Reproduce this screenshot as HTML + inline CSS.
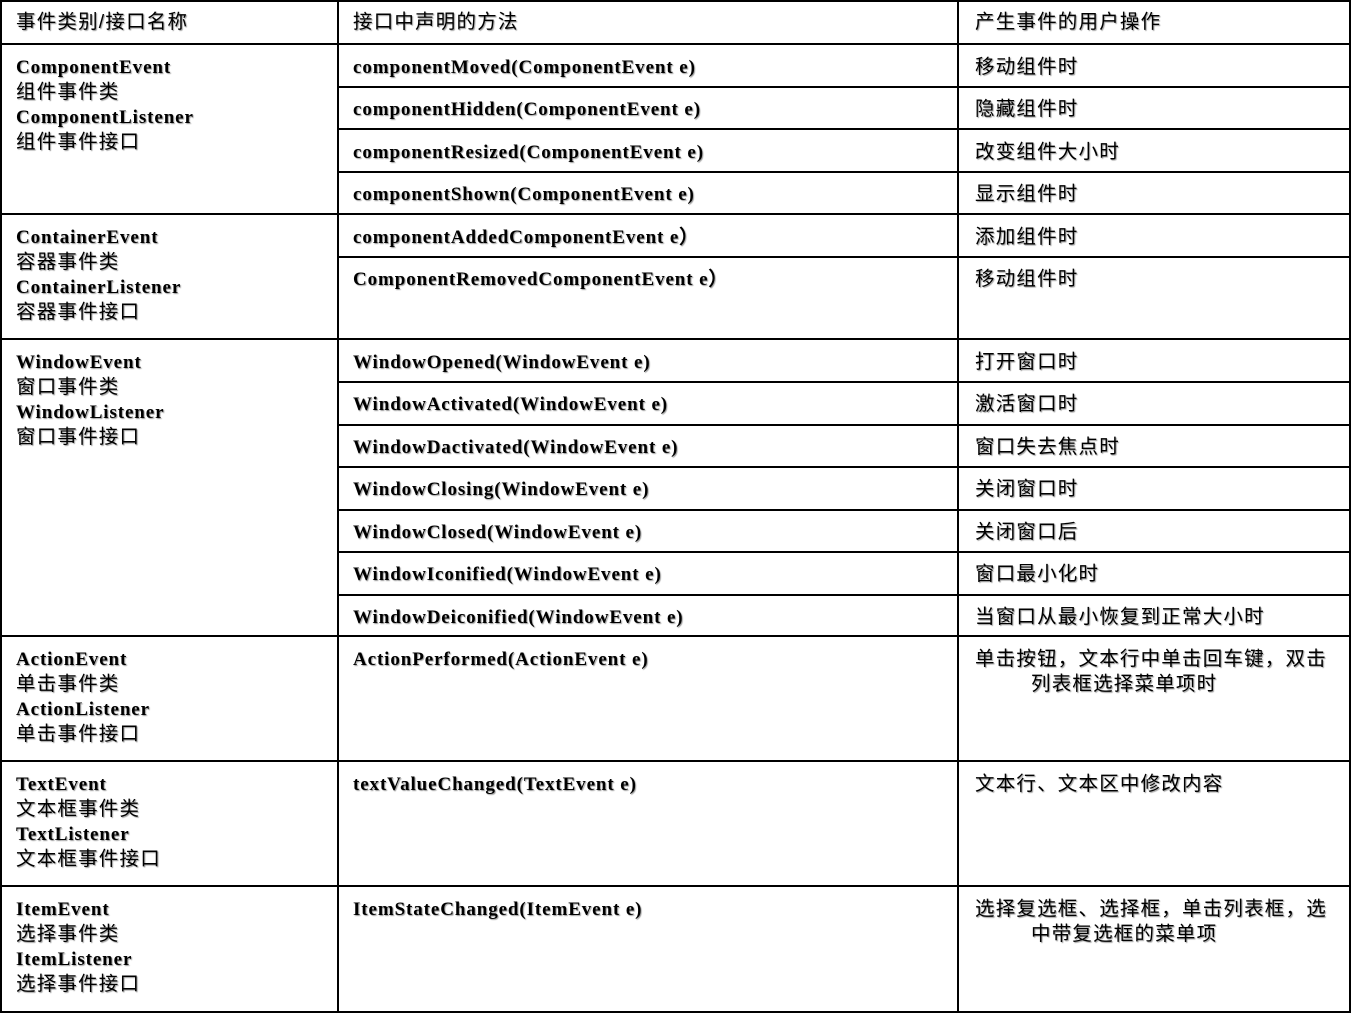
<!DOCTYPE html>
<html><head><meta charset="utf-8"><style>
html,body{margin:0;padding:0;background:#fff;width:1351px;height:1013px;overflow:hidden;position:relative}
.h{position:absolute;left:0;width:1351px;height:2px;background:#000}
.v{position:absolute;top:0;width:2px;background:#000}
.t{position:absolute;font-family:"Liberation Serif","WenQuanYi Zen Hei",serif;font-weight:bold;font-size:19px;letter-spacing:0.9px;line-height:25px;color:#000;text-shadow:1px 1px 1px #999;white-space:nowrap}
.c{font-family:"Liberation Sans","WenQuanYi Zen Hei",sans-serif;font-weight:normal;font-size:19.5px;letter-spacing:1.2px}
</style></head><body>
<div class="h" style="top:0"></div>
<div class="h" style="top:43px"></div>
<div class="h" style="top:86px;left:337px;width:1014px"></div>
<div class="h" style="top:128px;left:337px;width:1014px"></div>
<div class="h" style="top:171px;left:337px;width:1014px"></div>
<div class="h" style="top:213px"></div>
<div class="h" style="top:256px;left:337px;width:1014px"></div>
<div class="h" style="top:338px"></div>
<div class="h" style="top:381px;left:337px;width:1014px"></div>
<div class="h" style="top:424px;left:337px;width:1014px"></div>
<div class="h" style="top:466px;left:337px;width:1014px"></div>
<div class="h" style="top:509px;left:337px;width:1014px"></div>
<div class="h" style="top:551px;left:337px;width:1014px"></div>
<div class="h" style="top:594px;left:337px;width:1014px"></div>
<div class="h" style="top:635px"></div>
<div class="h" style="top:760px"></div>
<div class="h" style="top:885px"></div>
<div class="h" style="top:1011px"></div>
<div class="v" style="left:0;height:1013px"></div>
<div class="v" style="left:337px;height:1013px"></div>
<div class="v" style="left:957px;height:1013px"></div>
<div class="v" style="left:1349px;height:1013px"></div>

<div class="t c" style="left:16px;top:10px">事件类别/接口名称</div>
<div class="t c" style="left:353px;top:10px">接口中声明的方法</div>
<div class="t c" style="left:975px;top:10px">产生事件的用户操作</div>

<div class="t" style="left:16px;top:55px">ComponentEvent<br><span class="c">组件事件类</span><br>ComponentListener<br><span class="c">组件事件接口</span></div>
<div class="t" style="left:353px;top:55px">componentMoved(ComponentEvent e)</div>
<div class="t" style="left:353px;top:97px">componentHidden(ComponentEvent e)</div>
<div class="t" style="left:353px;top:140px">componentResized(ComponentEvent e)</div>
<div class="t" style="left:353px;top:182px">componentShown(ComponentEvent e)</div>
<div class="t c" style="left:975px;top:55px">移动组件时</div>
<div class="t c" style="left:975px;top:97px">隐藏组件时</div>
<div class="t c" style="left:975px;top:140px">改变组件大小时</div>
<div class="t c" style="left:975px;top:182px">显示组件时</div>

<div class="t" style="left:16px;top:225px">ContainerEvent<br><span class="c">容器事件类</span><br>ContainerListener<br><span class="c">容器事件接口</span></div>
<div class="t" style="left:353px;top:225px">componentAddedComponentEvent e）</div>
<div class="t" style="left:353px;top:267px">ComponentRemovedComponentEvent e）</div>
<div class="t c" style="left:975px;top:225px">添加组件时</div>
<div class="t c" style="left:975px;top:267px">移动组件时</div>

<div class="t" style="left:16px;top:350px">WindowEvent<br><span class="c">窗口事件类</span><br>WindowListener<br><span class="c">窗口事件接口</span></div>
<div class="t" style="left:353px;top:350px">WindowOpened(WindowEvent e)</div>
<div class="t" style="left:353px;top:392px">WindowActivated(WindowEvent e)</div>
<div class="t" style="left:353px;top:435px">WindowDactivated(WindowEvent e)</div>
<div class="t" style="left:353px;top:477px">WindowClosing(WindowEvent e)</div>
<div class="t" style="left:353px;top:520px">WindowClosed(WindowEvent e)</div>
<div class="t" style="left:353px;top:562px">WindowIconified(WindowEvent e)</div>
<div class="t" style="left:353px;top:605px">WindowDeiconified(WindowEvent e)</div>
<div class="t c" style="left:975px;top:350px">打开窗口时</div>
<div class="t c" style="left:975px;top:392px">激活窗口时</div>
<div class="t c" style="left:975px;top:435px">窗口失去焦点时</div>
<div class="t c" style="left:975px;top:477px">关闭窗口时</div>
<div class="t c" style="left:975px;top:520px">关闭窗口后</div>
<div class="t c" style="left:975px;top:562px">窗口最小化时</div>
<div class="t c" style="left:975px;top:605px">当窗口从最小恢复到正常大小时</div>

<div class="t" style="left:16px;top:647px">ActionEvent<br><span class="c">单击事件类</span><br>ActionListener<br><span class="c">单击事件接口</span></div>
<div class="t" style="left:353px;top:647px">ActionPerformed(ActionEvent e)</div>
<div class="t c" style="left:975px;top:647px">单击按钮，文本行中单击回车键，双击<br><span style="padding-left:56px">列表框选择菜单项时</span></div>

<div class="t" style="left:16px;top:772px">TextEvent<br><span class="c">文本框事件类</span><br>TextListener<br><span class="c">文本框事件接口</span></div>
<div class="t" style="left:353px;top:772px">textValueChanged(TextEvent e)</div>
<div class="t c" style="left:975px;top:772px">文本行、文本区中修改内容</div>

<div class="t" style="left:16px;top:897px">ItemEvent<br><span class="c">选择事件类</span><br>ItemListener<br><span class="c">选择事件接口</span></div>
<div class="t" style="left:353px;top:897px">ItemStateChanged(ItemEvent e)</div>
<div class="t c" style="left:975px;top:897px">选择复选框、选择框，单击列表框，选<br><span style="padding-left:56px">中带复选框的菜单项</span></div>
</body></html>
